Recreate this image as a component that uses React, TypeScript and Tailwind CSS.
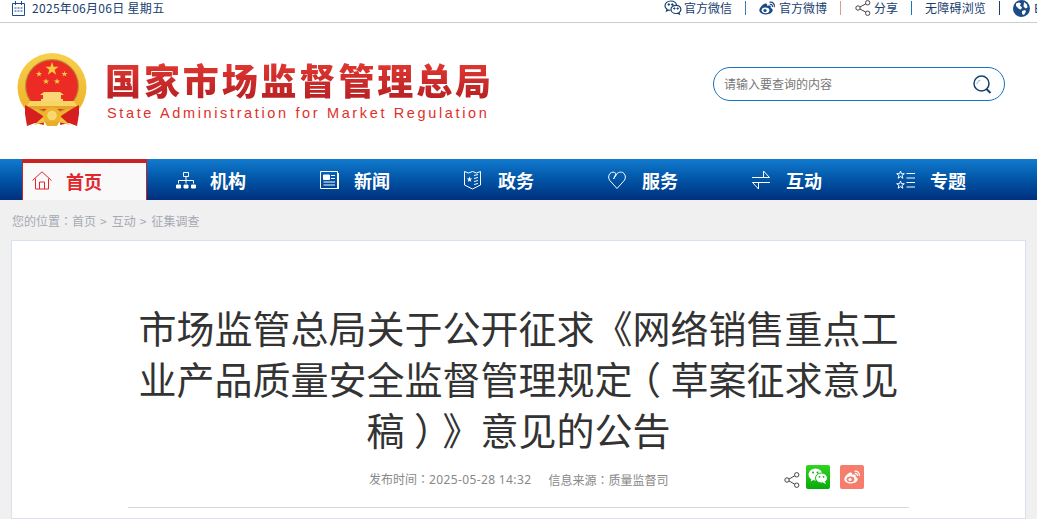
const cjk = { fontFamily: '"Noto Sans CJK SC", "Noto Sans", sans-serif' };
const tc = { fontFamily: '"Noto Sans CJK TC", "Noto Sans", sans-serif' };

function starPoints(cx: number, cy: number, r: number) {
  const pts: string[] = [];
  for (let i = 0; i < 10; i++) {
    const rad = i % 2 === 0 ? r : r * 0.4;
    const a = -Math.PI / 2 + (i * Math.PI) / 5;
    pts.push(`${(cx + rad * Math.cos(a)).toFixed(2)},${(cy + rad * Math.sin(a)).toFixed(2)}`);
  }
  return pts.join(" ");
}

function Emblem() {
  return (
    <svg width="70" height="75" viewBox="0 0 70 75" className="shrink-0">
      <defs>
        <linearGradient id="gold" x1="0" y1="0" x2="0" y2="1">
          <stop offset="0" stopColor="#f8cf4d" />
          <stop offset="1" stopColor="#ecae24" />
        </linearGradient>
      </defs>
      <circle cx="35" cy="34.500" r="34.500" fill="url(#gold)" />
      <circle cx="35" cy="33" r="27" fill="#b98a2e" />
      <circle cx="35" cy="33" r="25.800" fill="#ec2b25" />
      <polygon points={starPoints(35, 16, 7)} fill="#f6c93f" />
      <polygon points={starPoints(22, 21, 3.2)} fill="#f6c93f" />
      <polygon points={starPoints(47.500, 21, 3.2)} fill="#f6c93f" />
      <polygon points={starPoints(29, 28.500, 3.2)} fill="#f6c93f" />
      <polygon points={starPoints(40, 28.500, 3.2)} fill="#f6c93f" />
      <path d="M27 39h16l4 3h-3v4h2v2H24v-2h2v-4h-3z" fill="#f9d777" />
      <path d="M13 48h44l3 5H10z" fill="#f8d563" />
      <path d="M11 53h48l-3 3H14z" fill="#e5a52c" />
      <path d="M8 52l9 5 9 6 1 9-9-2-8 3-2-12z" fill="#d61f1f" />
      <path d="M62 52l-9 5-9 6-1 9 9-2 8 3 2-12z" fill="#d61f1f" />
      <circle cx="35" cy="63" r="9" fill="#eeb52c" />
      <circle cx="35" cy="62.500" r="4.800" fill="#f8d871" />
      <path d="M26 64l-9 8 11-3zM44 64l9 8-11-3z" fill="#f2c53f" />
      <path d="M27 68h16l-3 5h-10z" fill="#e9ad29" />
    </svg>
  );
}

const S = { fill: "none", stroke: "currentColor", strokeWidth: 1 } as const;

function ShareIcon({ size = 16 }: { size?: number }) {
  return (
    <svg width={size} height={size} viewBox="0 0 16 16" {...S} className="shrink-0 text-[#444]">
      <circle cx="3" cy="8" r="2.200" />
      <circle cx="12.700" cy="2.800" r="2.200" />
      <circle cx="12.700" cy="13.200" r="2.200" />
      <path d="M5 7l5.800-3.200M5 9l5.800 3.200" />
    </svg>
  );
}

function WechatOutline() {
  return (
    <svg width="18" height="16" viewBox="0 0 18 16" className="shrink-0 text-[#17406f]" {...S}>
      <path d="M6.800 1C3.500 1 1 3.100 1 5.700c0 1.500.8 2.700 2 3.600L2.500 11l2-1c.6.2 1.200.3 1.900.3" strokeWidth="1.200" />
      <path d="M6.800 1c3 0 5.400 1.800 5.800 4.200" strokeWidth="1.200" />
      <path d="M12 5.300c-2.800 0-5 1.800-5 4.100s2.200 4.100 5 4.100c.6 0 1.200-.1 1.700-.3l1.700.9-.4-1.500c1.100-.8 1.900-1.900 1.900-3.200 0-2.300-2.200-4.100-4.900-4.100z" strokeWidth="1.200" />
      <circle cx="4.800" cy="4.500" r=".8" fill="currentColor" />
      <circle cx="8.300" cy="4.500" r=".8" fill="currentColor" />
      <circle cx="10.300" cy="8.500" r=".7" fill="currentColor" />
      <circle cx="13.700" cy="8.500" r=".7" fill="currentColor" />
    </svg>
  );
}

function WeiboGlyph({ body, ring, pupil, ear }: { body: string; ring: string; pupil: string; ear: string }) {
  return (
    <svg width="17" height="14" viewBox="0 0 17 14" className="shrink-0">
      <path d="M7 13.500c-3.500 0-6.700-1.600-6.700-4.200C.3 7 3.500 3 6.500 2.500c1.500-.2 1.900 1 1.500 2.500 1.500-.6 3.500-.7 3.800.5.100.5 0 1-.2 1.400 1.300.4 2.100 1.200 2.100 2.400 0 2.200-3.100 4.200-6.700 4.200z" fill={body} />
      <ellipse cx="6.500" cy="9.300" rx="3.900" ry="2.900" fill={ring} />
      <circle cx="6" cy="9.500" r="1.600" fill={pupil} />
      <path d="M11 1.200c2.600-.4 4.800 1.700 4.300 4.400M11.300 3.400c1.300-.2 2.300.8 2.100 2.100" fill="none" stroke={ear} strokeWidth="1.200" strokeLinecap="round" />
    </svg>
  );
}

function Globe() {
  return (
    <svg width="17" height="17" viewBox="0 0 17 17" className="shrink-0">
      <circle cx="8.500" cy="8.500" r="8.500" fill="#1b4a86" />
      <path d="M3 3.500l3-1 2 1-1 2 2 2-1 2-2-.5-3-3zM11 2l3 2.500.5 3-2 1-2-2zM9 11l3-1 1 1.500-2 3.500-2-1z" fill="#fff" />
    </svg>
  );
}

function Sep({ className }: { className: string }) {
  return <span className={`h-[14px] w-px shrink-0 ${className}`} />;
}

function TopBar() {
  return (
    <div className="flex h-[23px] shrink-0 items-center overflow-hidden border-b border-[#cccccc] bg-white pb-[6px] pl-3 text-[12px] leading-none text-[#17406f]">
      <div className="flex w-[652px] shrink-0 items-center gap-2">
        <svg width="13" height="15" viewBox="0 0 13 15" className="shrink-0 text-[#1c4d8c]" fill="none" stroke="currentColor">
          <path d="M.5 2.500h12v12H.5z" />
          <path d="M3.500 0v4M9.500 0v4" />
          <path d="M2.500 7h2M5.500 7h2M8.500 7h2M2.500 10h2M5.500 10h2M8.500 10h2" />
        </svg>
        <span className="-ml-[1px] tracking-[0.3px]">2025年06月06日 星期五</span>
      </div>
      <div className="flex shrink-0 items-center">
        <WechatOutline />
        <span className="ml-[2px]">官方微信</span>
        <Sep className="mx-[13px] bg-[#3a7cb8]" />
        <WeiboGlyph body="#1b4a86" ring="#fff" pupil="#1b4a86" ear="#1b4a86" />
        <span className="ml-[3px]">官方微博</span>
        <Sep className="mx-[13px] bg-[#d99a86]" />
        <span className="ml-[1px]"><ShareIcon /></span>
        <span className="ml-[3px]">分享</span>
        <Sep className="mx-[13px] bg-[#1a73c0]" />
        <span className="tracking-[0.2px]">无障碍浏览</span>
        <Sep className="mx-[13px] bg-[#17406f]" />
        <Globe />
        <span className="ml-1">EN</span>
      </div>
    </div>
  );
}

function Header() {
  return (
    <div className="flex h-[136px] shrink-0 items-center bg-white pl-[17px]">
      <div className="mt-[-2px]"><Emblem /></div>
      <div className="ml-[18px] mt-[-2px] flex w-[608px] shrink-0 flex-col">
        <div className="bg-gradient-to-b from-[#e53a33] to-[#b72024] bg-clip-text text-[36px] font-black leading-[42px] tracking-[2.9px] text-transparent">
          国家市场监督管理总局
        </div>
        <div
          className="ml-[2px] mt-[4px] text-[14.5px] leading-[18px] tracking-[2.64px] text-[#e0302c]"
          style={{ fontFamily: '"Liberation Sans", sans-serif' }}
        >
          State Administration for Market Regulation
        </div>
      </div>
      <div className="mt-[-14px] flex h-[34px] w-[292px] shrink-0 items-center justify-between rounded-full border border-[#1a73c0] pl-[10px] pr-[12px]">
        <span className="text-[12px] leading-none text-[#777777]">请输入要查询的内容</span>
        <svg width="19" height="19" viewBox="0 0 19 19" fill="none" stroke="#17406f">
          <circle cx="8.500" cy="8.500" r="7.500" strokeWidth="1.500" />
          <path d="M13.500 14l4 4" strokeWidth="2" />
          <path d="M4 9c0-2 1.500-3.500 3.500-3.700" stroke="#7ab0dc" />
        </svg>
      </div>
    </div>
  );
}

const nodeIcon = (
  <svg width="20" height="18" viewBox="0 0 20 18" fill="none" stroke="#fff">
    <path d="M7.500 1.500h5v4h-5zM10 5.500v4M2.500 12.500v-3h15v3M10 9.500v3" />
    <path d="M.5 14h4v3h-4zM8 14h4v3H8zM15.500 14h4v3h-4z" fill="#fff" />
  </svg>
);
const newsIcon = (
  <svg width="20" height="18" viewBox="0 0 20 18" fill="none" stroke="#fff">
    <path d="M.5.500h17v17H.5z" />
    <path d="M18.500 2v16H2" />
    <path d="M3.500 4h6v4.500h-6z" fill="#fff" />
    <path d="M11 4.500h4M11 7.500h4M3.500 11h11.500M3.500 14h11.500" />
  </svg>
);
const shieldIcon = (
  <svg width="17" height="20" viewBox="0 0 17 20" fill="none" stroke="#fff">
    <path d="M.5 1.500l4 1.500 4-1.500 4 1.500 4-1.500v13.500l-8 4-8-4z" />
    <polygon points={starPoints(5.500, 9.500, 3)} fill="#fff" stroke="none" />
    <path d="M10 5.500l4-1M10 8.500l4-1M10 11.500l4-1M10 14.500l4-1" />
  </svg>
);
const heartIcon = (
  <svg width="18" height="18" viewBox="0 0 18 18" fill="none" stroke="#fff">
    <path d="M9 17.500L1.800 9.500C.2 7.500.2 4.500 2 2.500c1.800-1.900 4.500-1.800 6 .2L5.500 8M9 17.500l7.200-8c1.600-2 1.600-5-.2-7C14.200.6 11 .6 9 2.700L5.500 8" />
  </svg>
);
const swapIcon = (
  <svg width="18" height="20" viewBox="0 0 18 20" fill="none" stroke="#fff">
    <path d="M0 7.500h17.500L11.500 1v6.500" />
    <path d="M18 12.500H.5l6 6.500v-6.500" />
  </svg>
);
const listIcon = (
  <svg width="19" height="20" viewBox="0 0 19 20" fill="none" stroke="#fff">
    <polygon points={starPoints(4.500, 5, 4)} />
    <polygon points={starPoints(4.500, 15, 4)} />
    <path d="M10.500 3.500H19M10.500 8H19M10.500 12.500H19M10.500 17H19" />
  </svg>
);

const items = [
  { label: "机构", icon: nodeIcon },
  { label: "新闻", icon: newsIcon },
  { label: "政务", icon: shieldIcon },
  { label: "服务", icon: heartIcon },
  { label: "互动", icon: swapIcon },
  { label: "专题", icon: listIcon },
];

function Nav() {
  return (
    <div className="flex h-[41px] shrink-0 bg-gradient-to-b from-[#127bcf] to-[#002f7e] pl-[22px]">
      <div className="w-[144px] shrink-0">
        <div className="flex h-full w-[125px] items-center border-x border-t-[4px] border-[#c92424] bg-[#f9f9f9] pb-[2px] pl-[9px]">
          <svg width="20" height="19" viewBox="0 0 20 19" fill="none" stroke="#e8262a" className="shrink-0">
            <path d="M.5 9.500L10 .8l9.500 8.700" />
            <path d="M3.500 7.500V18h13V7.500" />
            <path d="M7.500 18v-7h5v7" />
          </svg>
          <span className="ml-[14px] text-[18px] font-bold leading-none text-[#e3262b]">首页</span>
        </div>
      </div>
      {items.map((it) => (
        <div key={it.label} className="flex w-[144px] shrink-0 items-center pl-[10px]">
          <span className="flex w-[20px] shrink-0 justify-start">{it.icon}</span>
          <span className="ml-[14px] text-[18px] font-bold leading-none text-white">{it.label}</span>
        </div>
      ))}
    </div>
  );
}

function Article() {
  return (
    <div className="mx-[11px] flex-1 border border-[#d8e2ee] bg-white px-[116px] pt-[60px]">
      <h1 className="text-center text-[38px] font-normal leading-[51px] text-[#333333] [text-spacing-trim:space-all]">
        市场监管总局关于公开征求《网络销售重点工业产品质量安全监督管理规定<span className="px-[9.5px] [font-feature-settings:'halt']">（</span>草案征求意见稿<span className="px-[9.5px] [font-feature-settings:'halt']">）</span>》意见的公告
      </h1>
      <div className="mt-[11px] flex h-[29px] items-center pl-[241px] text-[12px] leading-none text-[#888888]">
        <span>发布时间<span style={tc}>：</span><span className="tracking-[0.37px]" style={{ fontFamily: '"Noto Sans", sans-serif' }}>2025-05-28 14:32</span></span>
        <span className="ml-[17px]">信息来源<span style={tc}>：</span>质量监督司</span>
        <span className="ml-[116px]"><ShareIcon /></span>
        <span className="mb-[6px] ml-[6px] flex h-[24px] w-[24px] items-center justify-center rounded-[2px] bg-gradient-to-b from-[#2fd51f] to-[#06a90c]">
          <svg width="20" height="17" viewBox="0 0 20 17">
            <ellipse cx="7.500" cy="6.500" rx="7" ry="6" fill="#fff" />
            <path d="M3.500 10.500l-.8 3 3-1.700z" fill="#fff" />
            <ellipse cx="13.500" cy="10" rx="6" ry="5" fill="#fff" stroke="#16bb14" />
            <path d="M17 13.500l.8 2.500-3-1.400z" fill="#fff" />
            <circle cx="5" cy="4.500" r="1" fill="#12b012" />
            <circle cx="9.500" cy="4.500" r="1" fill="#12b012" />
            <circle cx="11.500" cy="8.800" r=".9" fill="#12b012" />
            <circle cx="15.500" cy="8.800" r=".9" fill="#12b012" />
          </svg>
        </span>
        <span className="mb-[6px] ml-[10px] flex h-[24px] w-[24px] items-center justify-center rounded-[2px] bg-[#f67c6b]">
          <WeiboGlyph body="#fff" ring="#f67c6b" pupil="#fff" ear="#fff" />
        </span>
      </div>
      <div className="mt-[13px] border-t border-[#d8d8d8]" />
    </div>
  );
}

export default function App() {
  return (
    <div className="flex h-[519px] w-[1037px] flex-col overflow-hidden bg-[#f0f0f0]" style={cjk}>
      <TopBar />
      <Header />
      <Nav />
      <div className="flex h-[40px] shrink-0 items-center pl-3 pt-[2px] text-[12px] leading-none text-[#a6a9b3]">
        您的位置<span style={tc}>：</span>首页<span className="ml-[4px] mr-[5px]">&gt;</span>互动<span className="ml-[4px] mr-[5px]">&gt;</span>征集调查
      </div>
      <Article />
    </div>
  );
}
